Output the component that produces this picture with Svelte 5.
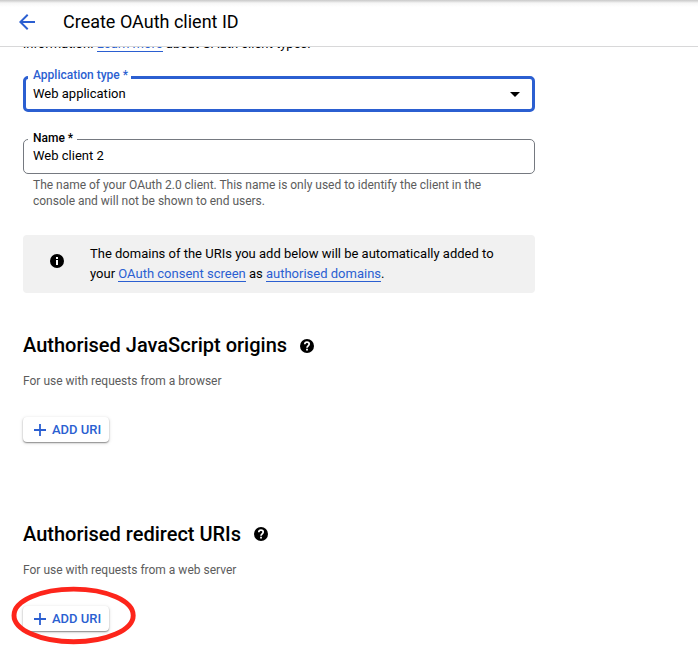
<script>
  const sections = [
    { title: 'Authorised JavaScript origins', hint: 'For use with requests from a browser', marked: false },
    { title: 'Authorised redirect URIs', hint: 'For use with requests from a web server', marked: true }
  ];
</script>

<div class="page">
  <header>
    <svg class="back" viewBox="0 0 16 16" width="16" height="16" aria-label="Back">
      <path d="M16 7H3.8l5.6-5.6L8 0 0 8l8 8 1.4-1.4L3.8 9H16z" fill="#2b5fd1" />
    </svg>
    <h1>Create OAuth client ID</h1>
  </header>

  <main>
    <p class="intro">information. <a class="more" href="#learn">Learn more</a> about OAuth client types.</p>

    <div class="field select">
      <span class="label">Application type *</span>
      <span class="value">Web application</span>
      <svg class="caret" viewBox="0 0 10 5" width="10" height="5"><path d="M0 0h10L5 5z" /></svg>
    </div>

    <div class="field name">
      <span class="label">Name *</span>
      <span class="value">Web client 2</span>
    </div>
    <p class="help">The name of your OAuth 2.0 client. This name is only used to identify the client in the<br />console and will not be shown to end users.</p>

    <div class="banner">
      <svg viewBox="0 0 14 14" width="14" height="14">
        <circle cx="7" cy="7" r="7" />
        <path d="M6 3h2v2H6zM6 6h2v5H6z" fill="#fff" />
      </svg>
      <p>
        The domains of the URIs you add below will be automatically added to<br />
        your <a href="#consent">OAuth consent screen</a> as <a href="#domains">authorised domains</a>.
      </p>
    </div>

    {#each sections as section}
      <section>
        <div class="heading">
          <h2>{section.title}</h2>
          <svg class:raised={section.marked} viewBox="0 0 14 14" width="14" height="14">
            <circle cx="7" cy="7" r="7" />
            <path d="M4.8 5.3C4.8 3.9 5.8 3.1 7 3.1s2.2.8 2.2 2C9.2 6.7 7 6.9 7 8.7" fill="none" stroke="#fff" stroke-width="1.7" />
            <path d="M6.1 9.8h1.8v1.8H6.1z" fill="#fff" />
          </svg>
        </div>
        <p class="hint">{section.hint}</p>
        <div class="action">
          <button>
            <svg viewBox="0 0 12 12" width="12" height="12"><path d="M5.1 0h1.8v5.1H12v1.8H6.9V12H5.1V6.9H0V5.1h5.1z" fill="#2b5fd1" /></svg>
            <span>ADD URI</span>
          </button>
          {#if section.marked}
            <svg class="ring" viewBox="0 0 126 60" width="126" height="60">
              <ellipse cx="62.6" cy="29.4" rx="59.6" ry="26.3" fill="none" stroke="#fd251b" stroke-width="4.9" />
            </svg>
          {/if}
        </div>
      </section>
    {/each}
  </main>
</div>

<style>
  .page {
    box-sizing: border-box;
    height: 657px;
    overflow: hidden;
    background: #fff;
    color: #000;
    font-family: Roboto, "Liberation Sans", sans-serif;
    font-size: 13px;
    white-space: nowrap;
  }
  h1, h2, p { margin: 0; font-weight: 400; }
  svg { display: block; flex: none; }
  header {
    position: relative;
    z-index: 1;
    box-sizing: border-box;
    height: 47px;
    padding: 0 0 2px 19px;
    display: flex;
    align-items: center;
    border-bottom: 1px solid #d8d8d9;
    background: linear-gradient(#cdcdcd 0, #d2d2d2 1px, #e9e9e9 2px, #f7f7f7 3.5px, #fff 7px);
  }
  h1 { margin-left: 28px; font-size: 18px; line-height: 24px; }
  main { padding-left: 23px; }
  .intro { height: 42px; margin-top: -13px; line-height: 20px; }
  a { color: #2b5fd1; text-decoration: none; border-bottom: 1px solid #2b5fd1; }
  .field {
    position: relative;
    box-sizing: border-box;
    width: 512px;
    height: 35px;
    display: flex;
    align-items: center;
    border: 1px solid #757980;
    border-radius: 5px;
    padding: 0 14px 2px 9px;
  }
  .select { height: 36px; border: 3px solid #2b5fd1; padding: 0 12px 0 7px; justify-content: space-between; }
  .label {
    position: absolute;
    top: -9px;
    left: 4px;
    padding: 0 4px 0 5px;
    background: #fff;
    font-size: 12px;
    line-height: 14px;
    font-weight: 500;
  }
  .select .label { top: -11px; left: 2px; padding-right: 3px; color: #2b5fd1; }
  .value { line-height: 18px; }
  .name { margin-top: 27px; }
  .help { margin: 3px 0 0 10px; font-size: 12px; line-height: 16px; letter-spacing: -.01px; color: #5c5c5c; }
  .banner {
    box-sizing: border-box;
    width: 512px;
    height: 58px;
    margin-top: 26px;
    padding-left: 27px;
    display: flex;
    border-radius: 4px;
    background: #f1f1f1;
  }
  .banner svg { margin-top: 19px; }
  .banner p { margin: 9px 0 0 26px; line-height: 20px; }
  section { height: 189px; }
  .heading { display: flex; align-items: center; padding-top: 40px; }
  h2 { font-size: 20px; line-height: 24px; font-weight: 500; }
  .heading svg { margin: 2px 0 0 13px; }
  .heading svg.raised { margin-top: 0; }
  .hint { margin-top: 16px; font-size: 12px; line-height: 16px; color: #5c5c5c; }
  .action { position: relative; margin-top: 28px; }
  button {
    width: 86px;
    height: 25px;
    padding: 0 0 0 11px;
    display: flex;
    align-items: center;
    gap: 6px;
    border: 0;
    border-radius: 4px;
    background: #fff;
    color: #2b5fd1;
    font: 500 13px/18px Roboto, sans-serif;
    box-shadow: 0 1px 1.5px rgba(0,0,0,.42), 0 1px 4px rgba(0,0,0,.12);
  }
  .ring { position: absolute; left: -12px; top: -20px; }
</style>
